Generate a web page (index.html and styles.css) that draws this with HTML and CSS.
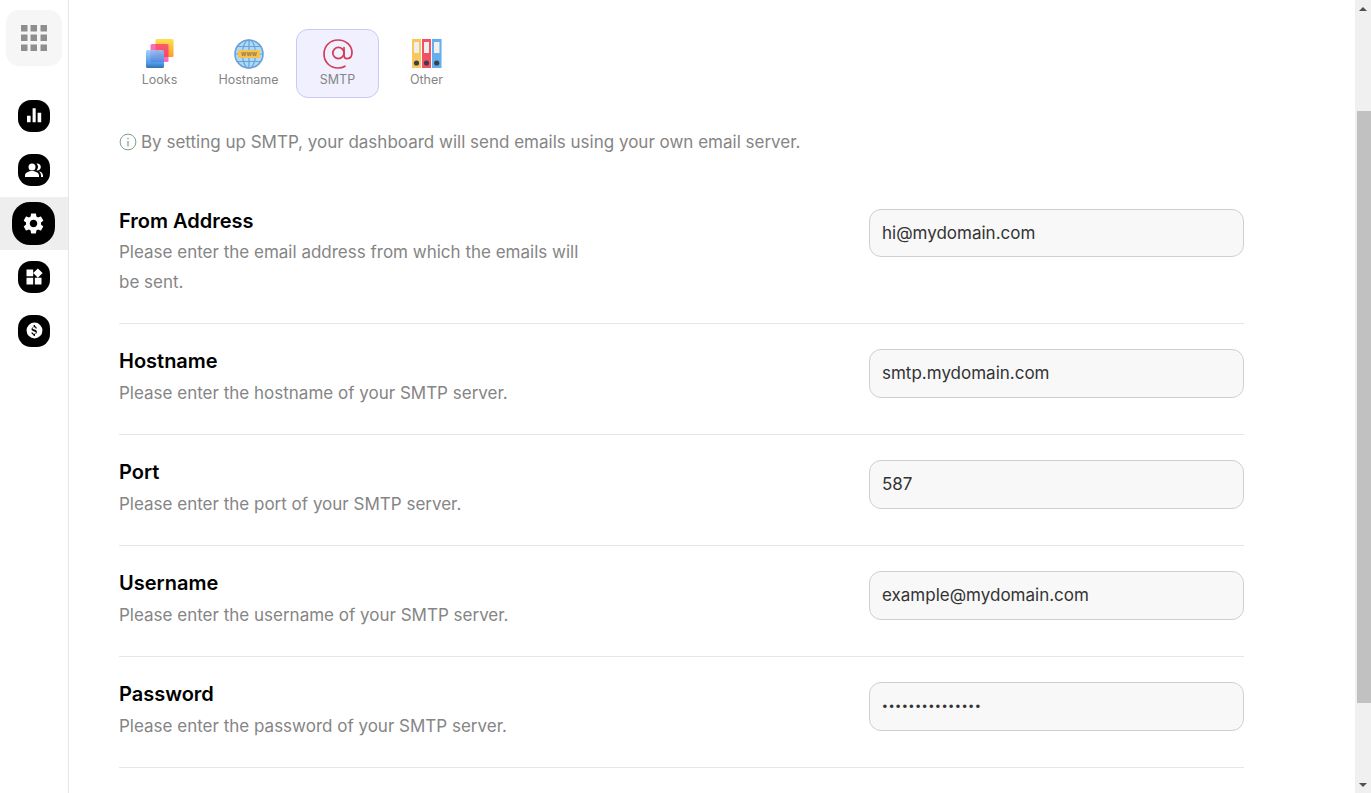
FILE: index.html
```html
<!DOCTYPE html>
<html lang="en">
<head>
<meta charset="utf-8">
<title>SMTP settings</title>
<link rel="stylesheet" href="styles.css">
</head>
<body>
<div class="app">
  <nav class="sidebar">
    <div class="logo">
      <svg width="26" height="26" viewBox="0 0 26 26" fill="#8e8e8e"><rect x="0" y="0" width="6.5" height="6.5"/><rect x="9.5" y="0" width="6.5" height="6.5"/><rect x="19.5" y="0" width="6.5" height="6.5"/><rect x="0" y="9.5" width="6.5" height="6.5"/><rect x="9.5" y="9.5" width="6.5" height="6.5"/><rect x="19.5" y="9.5" width="6.5" height="6.5"/><rect x="0" y="19.5" width="6.5" height="6.5"/><rect x="9.5" y="19.5" width="6.5" height="6.5"/><rect x="19.5" y="19.5" width="6.5" height="6.5"/></svg>
    </div>
    <ul class="nav">
      <li class="nav-item"><span class="nav-icon"><svg width="24" height="24" viewBox="0 0 24 24" fill="#fff"><path d="M5 11.7h3.6v6.6H5zM10.600 4.300h3.100v14h-3.100zM15.600 8.700h3.600v9.600h-3.600z"/></svg></span></li>
      <li class="nav-item"><span class="nav-icon"><svg width="24" height="24" viewBox="0 0 24 24" fill="#fff"><circle cx="10" cy="9" r="3.500"/><path d="M3 19v-1.500c0-3 4-4.500 7-4.500s7 1.500 7 4.500V19z"/><path d="M14.500 5.600a3.500 3.500 0 1 1 0 6.800 5 5 0 0 0 0-6.800z"/><path d="M16.500 13.200c2.500.4 4.500 1.800 4.500 4.300V19h-2v-1.500c0-1.800-1-3.300-2.500-4.300z"/></svg></span></li>
      <li class="nav-item active"><span class="nav-icon"><svg width="25" height="25" viewBox="0 0 24 24" fill="#fff"><path d="M19.14 12.94c.04-.3.06-.61.06-.94 0-.32-.02-.64-.07-.94l2.03-1.58c.18-.14.23-.41.12-.61l-1.92-3.32c-.12-.22-.37-.29-.59-.22l-2.39.96c-.5-.38-1.03-.7-1.62-.94l-.36-2.54c-.04-.24-.24-.41-.48-.41h-3.84c-.24 0-.43.17-.47.41l-.36 2.54c-.59.24-1.13.57-1.62.94l-2.39-.96c-.22-.08-.47 0-.59.22L2.74 8.87c-.12.21-.08.47.12.61l2.03 1.58c-.05.3-.09.63-.09.94s.02.64.07.94l-2.03 1.58c-.18.14-.23.41-.12.61l1.92 3.32c.12.22.37.29.59.22l2.39-.96c.5.38 1.03.7 1.62.94l.36 2.54c.05.24.24.41.48.41h3.84c.24 0 .44-.17.47-.41l.36-2.54c.59-.24 1.13-.56 1.62-.94l2.39.96c.22.08.47 0 .59-.22l1.92-3.32c.12-.22.07-.47-.12-.61l-2.01-1.58zM12 15.6c-1.98 0-3.6-1.62-3.6-3.6s1.62-3.6 3.6-3.6 3.6 1.62 3.6 3.6-1.62 3.6-3.6 3.6z"/></svg></span></li>
      <li class="nav-item"><span class="nav-icon"><svg width="20" height="20" viewBox="0 0 24 24" fill="#fff"><path d="M13 13v8h8v-8h-8zM3 21h8v-8H3v8zM3 3v8h8V3H3zm13.66-1.31L11 7.34 16.66 13l5.66-5.66-5.66-5.65z"/></svg></span></li>
      <li class="nav-item"><span class="nav-icon"><svg width="19" height="19" viewBox="0 0 24 24"><circle cx="12" cy="12" r="10" fill="#fff"/><path fill="#000" d="M12.600 17.600v1.400h-1.700v-1.400c-1.500-.3-2.700-1.300-2.800-3h1.600c.1.900.8 1.600 2.100 1.600 1.500 0 1.900-.8 1.900-1.300 0-.7-.4-1.300-2.100-1.700-2-.5-3.300-1.300-3.300-3 0-1.400 1.100-2.300 2.600-2.600V5.200h1.700v1.400c1.500.4 2.200 1.500 2.300 2.800h-1.600c0-.9-.5-1.500-1.800-1.500-1.200 0-1.900.5-1.900 1.300 0 .7.500 1.100 2.100 1.500s3.300 1.100 3.300 3.200c0 1.500-1.100 2.300-2.400 2.700z"/></svg></span></li>
    </ul>
  </nav>

  <main class="main">
    <div class="tabs">
      <div class="tab">
        <svg width="30" height="30" viewBox="0 0 30 30">
          <defs>
            <linearGradient id="ly" x1="0" y1="0" x2="0" y2="1"><stop offset="0" stop-color="#ffe14d"/><stop offset="1" stop-color="#ff9a2e"/></linearGradient>
            <linearGradient id="lb" x1="0" y1="0" x2="0" y2="1"><stop offset="0" stop-color="#8fcbff"/><stop offset=".75" stop-color="#2f86e6"/><stop offset="1" stop-color="#0b5a96"/></linearGradient>
          </defs>
          <rect x="10.500" y="0" width="18" height="18" rx="1.5" fill="url(#ly)"/>
          <rect x="5.500" y="5" width="18" height="18" rx="1.5" fill="#f7148a" fill-opacity=".62"/>
          <rect x="1" y="11" width="18" height="18" rx="1.5" fill="url(#lb)" fill-opacity=".85"/>
        </svg>
        <span class="tab-label">Looks</span>
      </div>
      <div class="tab">
        <svg width="30" height="30" viewBox="0 0 30 30">
          <circle cx="15" cy="15" r="14" fill="#a9dcf7" stroke="#6f9fd6" stroke-width="1.6"/>
          <g fill="none" stroke="#6f9fd6" stroke-width="1.2"><ellipse cx="15" cy="15" rx="6.5" ry="14"/><path d="M15 1v28M3 7.5h24M3 22.5h24M1 15h28"/></g>
          <rect x="4" y="11" width="22" height="8" rx="1" fill="#fbbf4c"/>
          <text class="www" x="15" y="16.800" text-anchor="middle">WWW</text>
        </svg>
        <span class="tab-label">Hostname</span>
      </div>
      <div class="tab selected">
        <svg width="30" height="30" viewBox="0 0 30 30">
          <g fill="none" stroke="#d33c55" stroke-width="1.7" stroke-linecap="round"><circle cx="15.4" cy="14" r="5.6"/><path d="M21 8.6v7.6c0 2.4 1.5 3.4 3.2 3.4 2.6 0 4.8-2 4.8-6C29 6.500 23 1 15 1 7 1 1 7 1 15s6 14 14 14c2.700 0 5-.6 7-1.800"/></g>
        </svg>
        <span class="tab-label">SMTP</span>
      </div>
      <div class="tab">
        <svg width="30" height="30" viewBox="0 0 30 30">
          <rect x="0" y="0" width="9" height="29" fill="#f8c85f"/>
          <rect x="10" y="0" width="9" height="29" fill="#f25165"/>
          <rect x="20" y="0" width="9.500" height="29" fill="#63aeef"/>
          <g fill="#eee"><rect x="2" y="3" width="5" height="11"/><rect x="12" y="3" width="5" height="11"/><rect x="22" y="3" width="5.500" height="11"/></g>
          <g fill="#3b3f4a"><circle cx="4.500" cy="24" r="2.600"/><circle cx="14.500" cy="24" r="2.600"/><circle cx="24.700" cy="24" r="2.600"/></g>
        </svg>
        <span class="tab-label">Other</span>
      </div>
    </div>

    <p class="info">
      <svg class="info-icon" width="18" height="18" viewBox="0 0 18 18" fill="none" stroke="#7f9d8a"><circle cx="9" cy="9" r="7.900"/><path d="M9 8v5.500" stroke-width="1.200"/><path d="M9 4.800v1.400" stroke-width="1.200"/></svg>
      <span>By setting up SMTP, your dashboard will send emails using your own email server.</span>
    </p>

    <form class="form">
      <div class="row">
        <div class="row-text">
          <h3 class="row-title">From Address</h3>
          <p class="row-desc">Please enter the email address from which the emails will be sent.</p>
        </div>
        <input class="field" type="text" value="hi@mydomain.com">
      </div>
      <div class="row">
        <div class="row-text">
          <h3 class="row-title">Hostname</h3>
          <p class="row-desc">Please enter the hostname of your SMTP server.</p>
        </div>
        <input class="field" type="text" value="smtp.mydomain.com">
      </div>
      <div class="row">
        <div class="row-text">
          <h3 class="row-title">Port</h3>
          <p class="row-desc">Please enter the port of your SMTP server.</p>
        </div>
        <input class="field" type="text" value="587">
      </div>
      <div class="row">
        <div class="row-text">
          <h3 class="row-title">Username</h3>
          <p class="row-desc">Please enter the username of your SMTP server.</p>
        </div>
        <input class="field" type="text" value="example@mydomain.com">
      </div>
      <div class="row">
        <div class="row-text">
          <h3 class="row-title">Password</h3>
          <p class="row-desc">Please enter the password of your SMTP server.</p>
        </div>
        <input class="field field-password" type="password" value="passwordpasswor">
      </div>
    </form>
  </main>

  <div class="scrollbar">
    <div class="scroll-btn"><span class="arrow-up"></span></div>
    <div class="scroll-track"><div class="scroll-thumb"></div></div>
    <div class="scroll-btn"><span class="arrow-down"></span></div>
  </div>
</div>
</body>
</html>
```

FILE: styles.css
```css
* { box-sizing: border-box; }
html, body { margin: 0; height: 100%; overflow: hidden; background: #fff; }
body { font-family: Inter, Roboto, sans-serif; color: #000; }

.app { display: flex; height: 793px; }

.sidebar { flex: 0 0 69px; border-right: 1px solid #e6e6e6; padding-top: 10px; }
.logo { width: 56px; height: 56px; margin-left: 6px; border-radius: 13px; background: #f6f6f6; display: flex; align-items: center; justify-content: center; }
.nav { list-style: none; margin: 23.200px 0 0; padding: 0; }
.nav-item { height: 53.700px; display: flex; align-items: center; justify-content: center; }
.nav-icon { width: 32px; height: 32px; border-radius: 13px; background: #000; display: flex; align-items: center; justify-content: center; }
.nav-item.active { background: #eeeeee; padding-right: 1px; }
.nav-item.active .nav-icon { width: 43px; height: 43px; border-radius: 18px; }

.main { flex: 1 1 auto; padding: 29px 111px 0 50px; overflow: hidden; }

.tabs { display: flex; gap: 6px; margin-left: -1px; }
.tab { width: 83px; height: 69px; border: 1px solid transparent; border-radius: 12px; padding-top: 9px; display: flex; flex-direction: column; align-items: center; }
.tab.selected { background: #f0f0fe; border-color: #c9c9f7; }
.tab-label { margin-top: 3px; font-size: 12.500px; line-height: 16px; color: #858585; }
.www { font-size: 5px; font-weight: 700; fill: #8a7a55; }

.info { margin: 34px 0 0; height: 20px; display: flex; align-items: center; gap: 4px; font-size: 17px; line-height: 20px; color: #858585; }
.info-icon { flex: none; }

.form { margin-top: 31.500px; }
.row { display: flex; justify-content: space-between; align-items: flex-start; padding: 25px 0; border-bottom: 1px solid #e6e6e6; }
.row-text { width: 475px; min-height: 60px; padding-bottom: .85px; }
.row-title { margin: 0 0 4.200px; font-size: 20px; line-height: 24.500px; font-weight: 600; color: #000; }
.row-desc { margin: 0; font-size: 17px; line-height: 30px; color: #858585; }
.field { flex: none; width: 375px; height: 48.500px; padding: 0 12px; border: 1px solid #cfcfcf; border-radius: 12px; background: #f8f8f8; font: 17px Inter, Roboto, sans-serif; color: #333; outline: none; }
.field-password { font-family: Roboto, sans-serif; letter-spacing: .9px; }

.scrollbar { flex: 0 0 16px; display: flex; flex-direction: column; background: #f0f0f0; }
.scroll-btn { flex: 0 0 17px; display: flex; align-items: center; justify-content: center; }
.arrow-up { border: 4px solid transparent; border-top: 0; border-bottom: 4px solid #505050; }
.arrow-down { border: 4px solid transparent; border-bottom: 0; border-top: 4px solid #505050; }
.scroll-track { flex: 1; padding: 94px 0 73px; }
.scroll-thumb { height: 100%; margin-left: 2px; background: #c1c1c1; }
```
